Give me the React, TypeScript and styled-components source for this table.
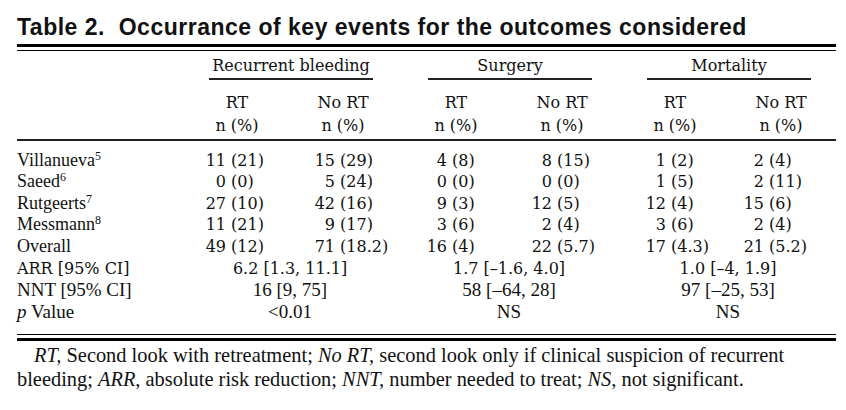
import React from "react";
import styled, { createGlobalStyle } from "styled-components";

const Global = createGlobalStyle`
  html, body { margin: 0; padding: 0; background: #ffffff; }
  body { width: 846px; height: 410px; overflow: hidden; }
`;

const Page = styled.div`
  width: 846px;
  height: 410px;
  box-sizing: border-box;
  padding: 15px 10px 0 17px;
  background: #ffffff;
  color: #111111;
`;

const Title = styled.h1`
  margin: 0;
  font-family: "Liberation Sans", Arial, sans-serif;
  font-weight: 700;
  font-size: 23px;
  line-height: 24px;
  letter-spacing: 0.5px;
  white-space: nowrap;
`;

const TopRule = styled.div`
  margin-top: 5px;
  height: 3px;
  border-top: 3px solid #000;
  border-bottom: 1px solid #000;
`;

const BottomRule = styled.div`
  height: 3px;
  border-top: 1px solid #000;
  border-bottom: 3px solid #000;
`;

const Table = styled.table`
  width: 819px;
  table-layout: fixed;
  border-collapse: separate;
  border-spacing: 0;
  font-family: "DejaVu Serif", serif;
  font-size: 16px;
  color: #111111;
`;

const GroupCell = styled.th`
  padding: 5px 0 11px;
  font-weight: 400;
`;

const GroupLabel = styled.span`
  display: block;
  margin: 0 23px 0 25px;
  padding-bottom: 2px;
  border-bottom: 2px solid #222;
  line-height: 20px;
  text-align: center;
`;

const SubCell = styled.th<{ $last?: boolean }>`
  padding: 0 0 ${(p) => (p.$last ? "2px" : "0")};
  font-weight: 400;
  line-height: 23px;
  text-align: center;
  border-bottom: ${(p) => (p.$last ? "2px solid #222" : "none")};
`;

const Stub = styled.td<{ $first?: boolean; $font?: "name" | "narrow"; $end?: boolean }>`
  padding: ${(p) => (p.$first ? "8.6px" : "0")} 0 ${(p) => (p.$end ? "11.5px" : "0")};
  line-height: 21.6px;
  text-align: left;
  white-space: nowrap;
  font-family: ${(p) => (p.$font ? '"Liberation Serif", serif' : "inherit")};
  font-size: ${(p) => (p.$font === "name" ? "18px" : p.$font === "narrow" ? "19px" : "inherit")};
`;

const Cell = styled.td<{ $first?: boolean }>`
  padding: ${(p) => (p.$first ? "8.6px" : "0")} 0 0;
  line-height: 21.6px;
  text-align: left;
  white-space: nowrap;
`;

const MergedCell = styled.td<{ $narrow?: boolean; $end?: boolean }>`
  padding: 0 0 ${(p) => (p.$end ? "11.5px" : "0")};
  line-height: 21.6px;
  text-align: center;
  white-space: nowrap;
  font-family: ${(p) => (p.$narrow ? '"Liberation Serif", serif' : "inherit")};
  font-size: ${(p) => (p.$narrow ? "19px" : "inherit")};
`;

const IntPart = styled.span<{ $w: number }>`
  display: inline-block;
  width: ${(p) => p.$w}px;
  text-align: right;
`;

const Sup = styled.sup`
  font-size: 12px;
  line-height: 0;
  vertical-align: 6px;
`;

const Footnote = styled.p`
  margin: 0;
  padding-top: 2px;
  font-family: "Liberation Serif", serif;
  font-size: 20.4px;
  line-height: 24px;
  text-indent: 17px;
  color: #111111;
  white-space: nowrap;
`;

const colWidths = [167, 106, 106, 7, 106, 106, 7, 106, 106, 2];
const intWidths = [42, 45, 44, 43, 44, 36];

type Row = { name: string; sup?: string; values: string[] };

const rows: Row[] = [
  { name: "Villanueva", sup: "5", values: ["11 (21)", "15 (29)", "4 (8)", "8 (15)", "1 (2)", "2 (4)"] },
  { name: "Saeed", sup: "6", values: ["0 (0)", "5 (24)", "0 (0)", "0 (0)", "1 (5)", "2 (11)"] },
  { name: "Rutgeerts", sup: "7", values: ["27 (10)", "42 (16)", "9 (3)", "12 (5)", "12 (4)", "15 (6)"] },
  { name: "Messmann", sup: "8", values: ["11 (21)", "9 (17)", "3 (6)", "2 (4)", "3 (6)", "2 (4)"] },
  { name: "Overall", values: ["49 (12)", "71 (18.2)", "16 (4)", "22 (5.7)", "17 (4.3)", "21 (5.2)"] },
];

const Value = ({ text, w }: { text: string; w: number }) => {
  const i = text.indexOf(" ");
  return (
    <>
      <IntPart $w={w}>{text.slice(0, i)}</IntPart>
      {"\u00a0" + text.slice(i + 1)}
    </>
  );
};

const groups = ["Recurrent bleeding", "Surgery", "Mortality"];

export default function App() {
  return (
    <Page>
      <Global />
      <Title>Table 2.&nbsp; Occurrance of key events for the outcomes considered</Title>
      <TopRule />
      <Table>
        <colgroup>
          {colWidths.map((w, i) => (
            <col key={i} style={{ width: w }} />
          ))}
        </colgroup>
        <thead>
          <tr>
            <GroupCell />
            {groups.map((g) => (
              <React.Fragment key={g}>
                <GroupCell colSpan={2}>
                  <GroupLabel>{g}</GroupLabel>
                </GroupCell>
                <GroupCell />
              </React.Fragment>
            ))}
          </tr>
          <tr>
            <SubCell />
            {[0, 1, 2].map((g) => (
              <React.Fragment key={g}>
                <SubCell>RT</SubCell>
                <SubCell>No RT</SubCell>
                <SubCell />
              </React.Fragment>
            ))}
          </tr>
          <tr>
            <SubCell $last />
            {[0, 1, 2].map((g) => (
              <React.Fragment key={g}>
                <SubCell $last>n (%)</SubCell>
                <SubCell $last>n (%)</SubCell>
                <SubCell $last />
              </React.Fragment>
            ))}
          </tr>
        </thead>
        <tbody>
          {rows.map((r, ri) => (
            <tr key={r.name}>
              <Stub $first={ri === 0} $font="name">
                {r.name}
                {r.sup && <Sup>{r.sup}</Sup>}
              </Stub>
              {[0, 1, 2].map((g) => (
                <React.Fragment key={g}>
                  <Cell $first={ri === 0}>
                    <Value text={r.values[g * 2]} w={intWidths[g * 2]} />
                  </Cell>
                  <Cell $first={ri === 0}>
                    <Value text={r.values[g * 2 + 1]} w={intWidths[g * 2 + 1]} />
                  </Cell>
                  <Cell $first={ri === 0} />
                </React.Fragment>
              ))}
            </tr>
          ))}
          <tr>
            <Stub>ARR [95% CI]</Stub>
            <MergedCell colSpan={2}>6.2 [1.3, 11.1]</MergedCell>
            <MergedCell />
            <MergedCell colSpan={2}>1.7 [–1.6, 4.0]</MergedCell>
            <MergedCell />
            <MergedCell colSpan={2}>1.0 [–4, 1.9]</MergedCell>
            <MergedCell />
          </tr>
          <tr>
            <Stub $font="narrow">NNT [95% CI]</Stub>
            <MergedCell $narrow colSpan={2}>16 [9, 75]</MergedCell>
            <MergedCell $narrow />
            <MergedCell $narrow colSpan={2}>58 [–64, 28]</MergedCell>
            <MergedCell $narrow />
            <MergedCell $narrow colSpan={2}>97 [–25, 53]</MergedCell>
            <MergedCell $narrow />
          </tr>
          <tr>
            <Stub $font="narrow" $end>
              <i>p</i> Value
            </Stub>
            <MergedCell $narrow $end colSpan={2}>&lt;0.01</MergedCell>
            <MergedCell $narrow $end />
            <MergedCell $narrow $end colSpan={2}>NS</MergedCell>
            <MergedCell $narrow $end />
            <MergedCell $narrow $end colSpan={2}>NS</MergedCell>
            <MergedCell $narrow $end />
          </tr>
        </tbody>
      </Table>
      <BottomRule />
      <Footnote>
        <i>RT,</i> Second look with retreatment; <i>No RT,</i> second look only if clinical suspicion of recurrent
        <br />
        bleeding; <i>ARR,</i> absolute risk reduction; <i>NNT,</i> number needed to treat; <i>NS,</i> not significant.
      </Footnote>
    </Page>
  );
}
